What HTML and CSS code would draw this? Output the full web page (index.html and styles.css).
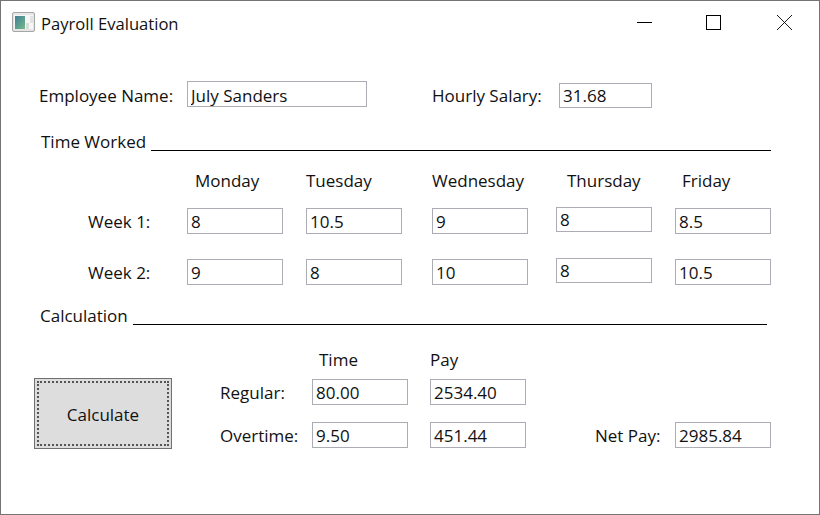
FILE: index.html
```html
<!DOCTYPE html>
<html lang="en">
<head>
  <meta charset="UTF-8" />
  <title>Payroll Evaluation</title>
  <link rel="stylesheet" href="styles.css">
</head>
<body>
  <div class="window">
    <header class="titlebar">
      <svg class="app-icon" width="23" height="20" viewBox="0 0 23 20">
        <defs>
          <linearGradient id="iconFill" x1="0" y1="0" x2="1" y2="1">
            <stop offset="0" stop-color="#3f7f96"/>
            <stop offset="1" stop-color="#76b98a"/>
          </linearGradient>
        </defs>
        <rect x="0.5" y="0.5" width="22" height="19" rx="1.5" fill="#e6e6e6" stroke="#a6a6a6"/>
        <rect x="2" y="3" width="19" height="14" fill="#f6f6f6"/>
        <rect x="3" y="4" width="10" height="13" fill="url(#iconFill)"/>
        <rect x="14" y="11" width="3" height="6" fill="#d9dedb"/>
        <rect x="18" y="4" width="3" height="7" fill="#dfe3e1"/>
      </svg>
      <span class="title">Payroll Evaluation</span>
      <svg class="win-btn min-btn" width="15" height="15" viewBox="0 0 15 15">
        <path d="M0 7.5H15" stroke="#000" fill="none"/>
      </svg>
      <svg class="win-btn max-btn" width="15" height="15" viewBox="0 0 15 15">
        <rect x="0.5" y="0.5" width="14" height="14" stroke="#000" fill="none"/>
      </svg>
      <svg class="win-btn close-btn" width="15" height="15" viewBox="0 0 15 15">
        <path d="M0 0L15 15M15 0L0 15" stroke="#000" stroke-width="0.9" fill="none"/>
      </svg>
    </header>

    <main class="form">
      <div class="employee-row">
        <label class="employee-label">Employee Name:</label>
        <input class="field name-field" value="July Sanders">
        <label class="salary-label">Hourly Salary:</label>
        <input class="field salary-field" value="31.68">
      </div>

      <div class="section time-section">
        <span>Time Worked</span>
        <div class="rule"></div>
      </div>

      <div class="week-grid">
        <span></span>
        <span class="day monday">Monday</span>
        <span class="day">Tuesday</span>
        <span class="day">Wednesday</span>
        <span class="day thursday">Thursday</span>
        <span class="day friday">Friday</span>

        <span class="week-label">Week 1:</span>
        <input class="field low" value="8">
        <input class="field low" value="10.5">
        <input class="field low" value="9">
        <input class="field short" value="8">
        <input class="field low" value="8.5">

        <span class="week-label">Week 2:</span>
        <input class="field low" value="9">
        <input class="field low" value="8">
        <input class="field low" value="10">
        <input class="field short" value="8">
        <input class="field low" value="10.5">
      </div>

      <div class="section calc-section">
        <span>Calculation</span>
        <div class="rule"></div>
      </div>

      <div class="calc-body">
        <button class="calc-btn"><span>Calculate</span></button>
        <div class="calc-grid">
          <span></span>
          <span class="head time-head">Time</span>
          <span class="head">Pay</span>
          <span></span>
          <span></span>

          <span class="calc-label">Regular:</span>
          <input class="field" value="80.00">
          <input class="field" value="2534.40">
          <span></span>
          <span></span>

          <span class="calc-label">Overtime:</span>
          <input class="field" value="9.50">
          <input class="field" value="451.44">
          <span class="calc-label">Net Pay:</span>
          <input class="field" value="2985.84">
        </div>
      </div>
    </main>
  </div>
</body>
</html>
```

FILE: styles.css
```css
* {
  box-sizing: border-box;
}

html, body {
  margin: 0;
  padding: 0;
  background: #fff;
}

body {
  font-family: "Open Sans", "Noto Sans", sans-serif;
  font-size: 17px;
  line-height: 20px;
  color: #111;
}

.window {
  width: 820px;
  height: 515px;
  border: 1px solid #747474;
  background: #fff;
  overflow: hidden;
}

.titlebar {
  display: flex;
  align-items: flex-start;
  height: 46px;
  padding: 11px 0 0 11px;
}

.app-icon {
  flex: none;
}

.title {
  margin-left: 6px;
  margin-top: 2px;
  font-size: 16.6px;
}

.win-btn {
  flex: none;
  margin-top: 3px;
}

.min-btn {
  margin-left: auto;
}

.max-btn {
  margin-left: 54px;
}

.close-btn {
  margin-left: 56px;
  margin-right: 27px;
}

.form {
  padding-top: 34px;
}

.field {
  display: block;
  width: 96px;
  height: 26px;
  margin: 0;
  padding: 0 3px;
  border: 1px solid #acacb4;
  border-radius: 0;
  outline: none;
  background: #fff;
  font: inherit;
  color: #111;
}

.employee-row {
  display: flex;
  align-items: flex-start;
  height: 27px;
}

.employee-label {
  width: 148px;
  margin-left: 38px;
  line-height: 30px;
}

.name-field {
  width: 180px;
  padding-top: 2px;
}

.salary-label {
  width: 127px;
  margin-left: 65px;
  line-height: 30px;
}

.salary-field {
  width: 93px;
  height: 25px;
  margin-top: 2px;
}

.section {
  display: flex;
  align-items: flex-end;
  height: 20px;
  white-space: nowrap;
}

.rule {
  flex: 1;
  height: 1px;
  margin-bottom: 1px;
  background: #000;
}

.time-section {
  margin-top: 24px;
  padding: 0 48px 0 40px;
}

.time-section .rule {
  margin-left: 5px;
}

.week-grid {
  display: grid;
  grid-template-columns: 186px 119px 126px 124px 119px 96px;
  grid-template-rows: 36px 51px 26px;
  margin-top: 19px;
  align-items: start;
}

.day {
  white-space: nowrap;
}

.monday {
  margin-left: 8px;
}

.thursday {
  margin-left: 11px;
}

.friday {
  margin-left: 7px;
}

.week-label {
  margin-top: 1px;
  padding-left: 87px;
  line-height: 28px;
}

.low {
  margin-top: 1px;
}

.short {
  height: 25px;
}

.calc-section {
  margin-top: 21px;
  height: 21px;
  padding: 0 52px 0 39px;
}

.calc-section .rule {
  margin-left: 5px;
}

.calc-body {
  display: flex;
  align-items: flex-start;
  margin-top: 24px;
}

.calc-btn {
  flex: none;
  width: 138px;
  height: 71px;
  margin: 28px 0 0 33px;
  padding: 2px;
  border: 1px solid #707070;
  background: #ddd;
  font: inherit;
  color: #111;
}

.calc-btn span {
  display: flex;
  align-items: center;
  justify-content: center;
  height: 100%;
  padding-top: 2px;
  border: 2px dotted #555;
}

.calc-grid {
  display: grid;
  grid-template-columns: 92px 118px 165px 80px 96px;
  grid-template-rows: 29px 43px 26px;
  margin-left: 48px;
  align-items: start;
}

.head {
  white-space: nowrap;
}

.time-head {
  margin-left: 7px;
}

.calc-label {
  line-height: 28px;
  white-space: nowrap;
}
```
